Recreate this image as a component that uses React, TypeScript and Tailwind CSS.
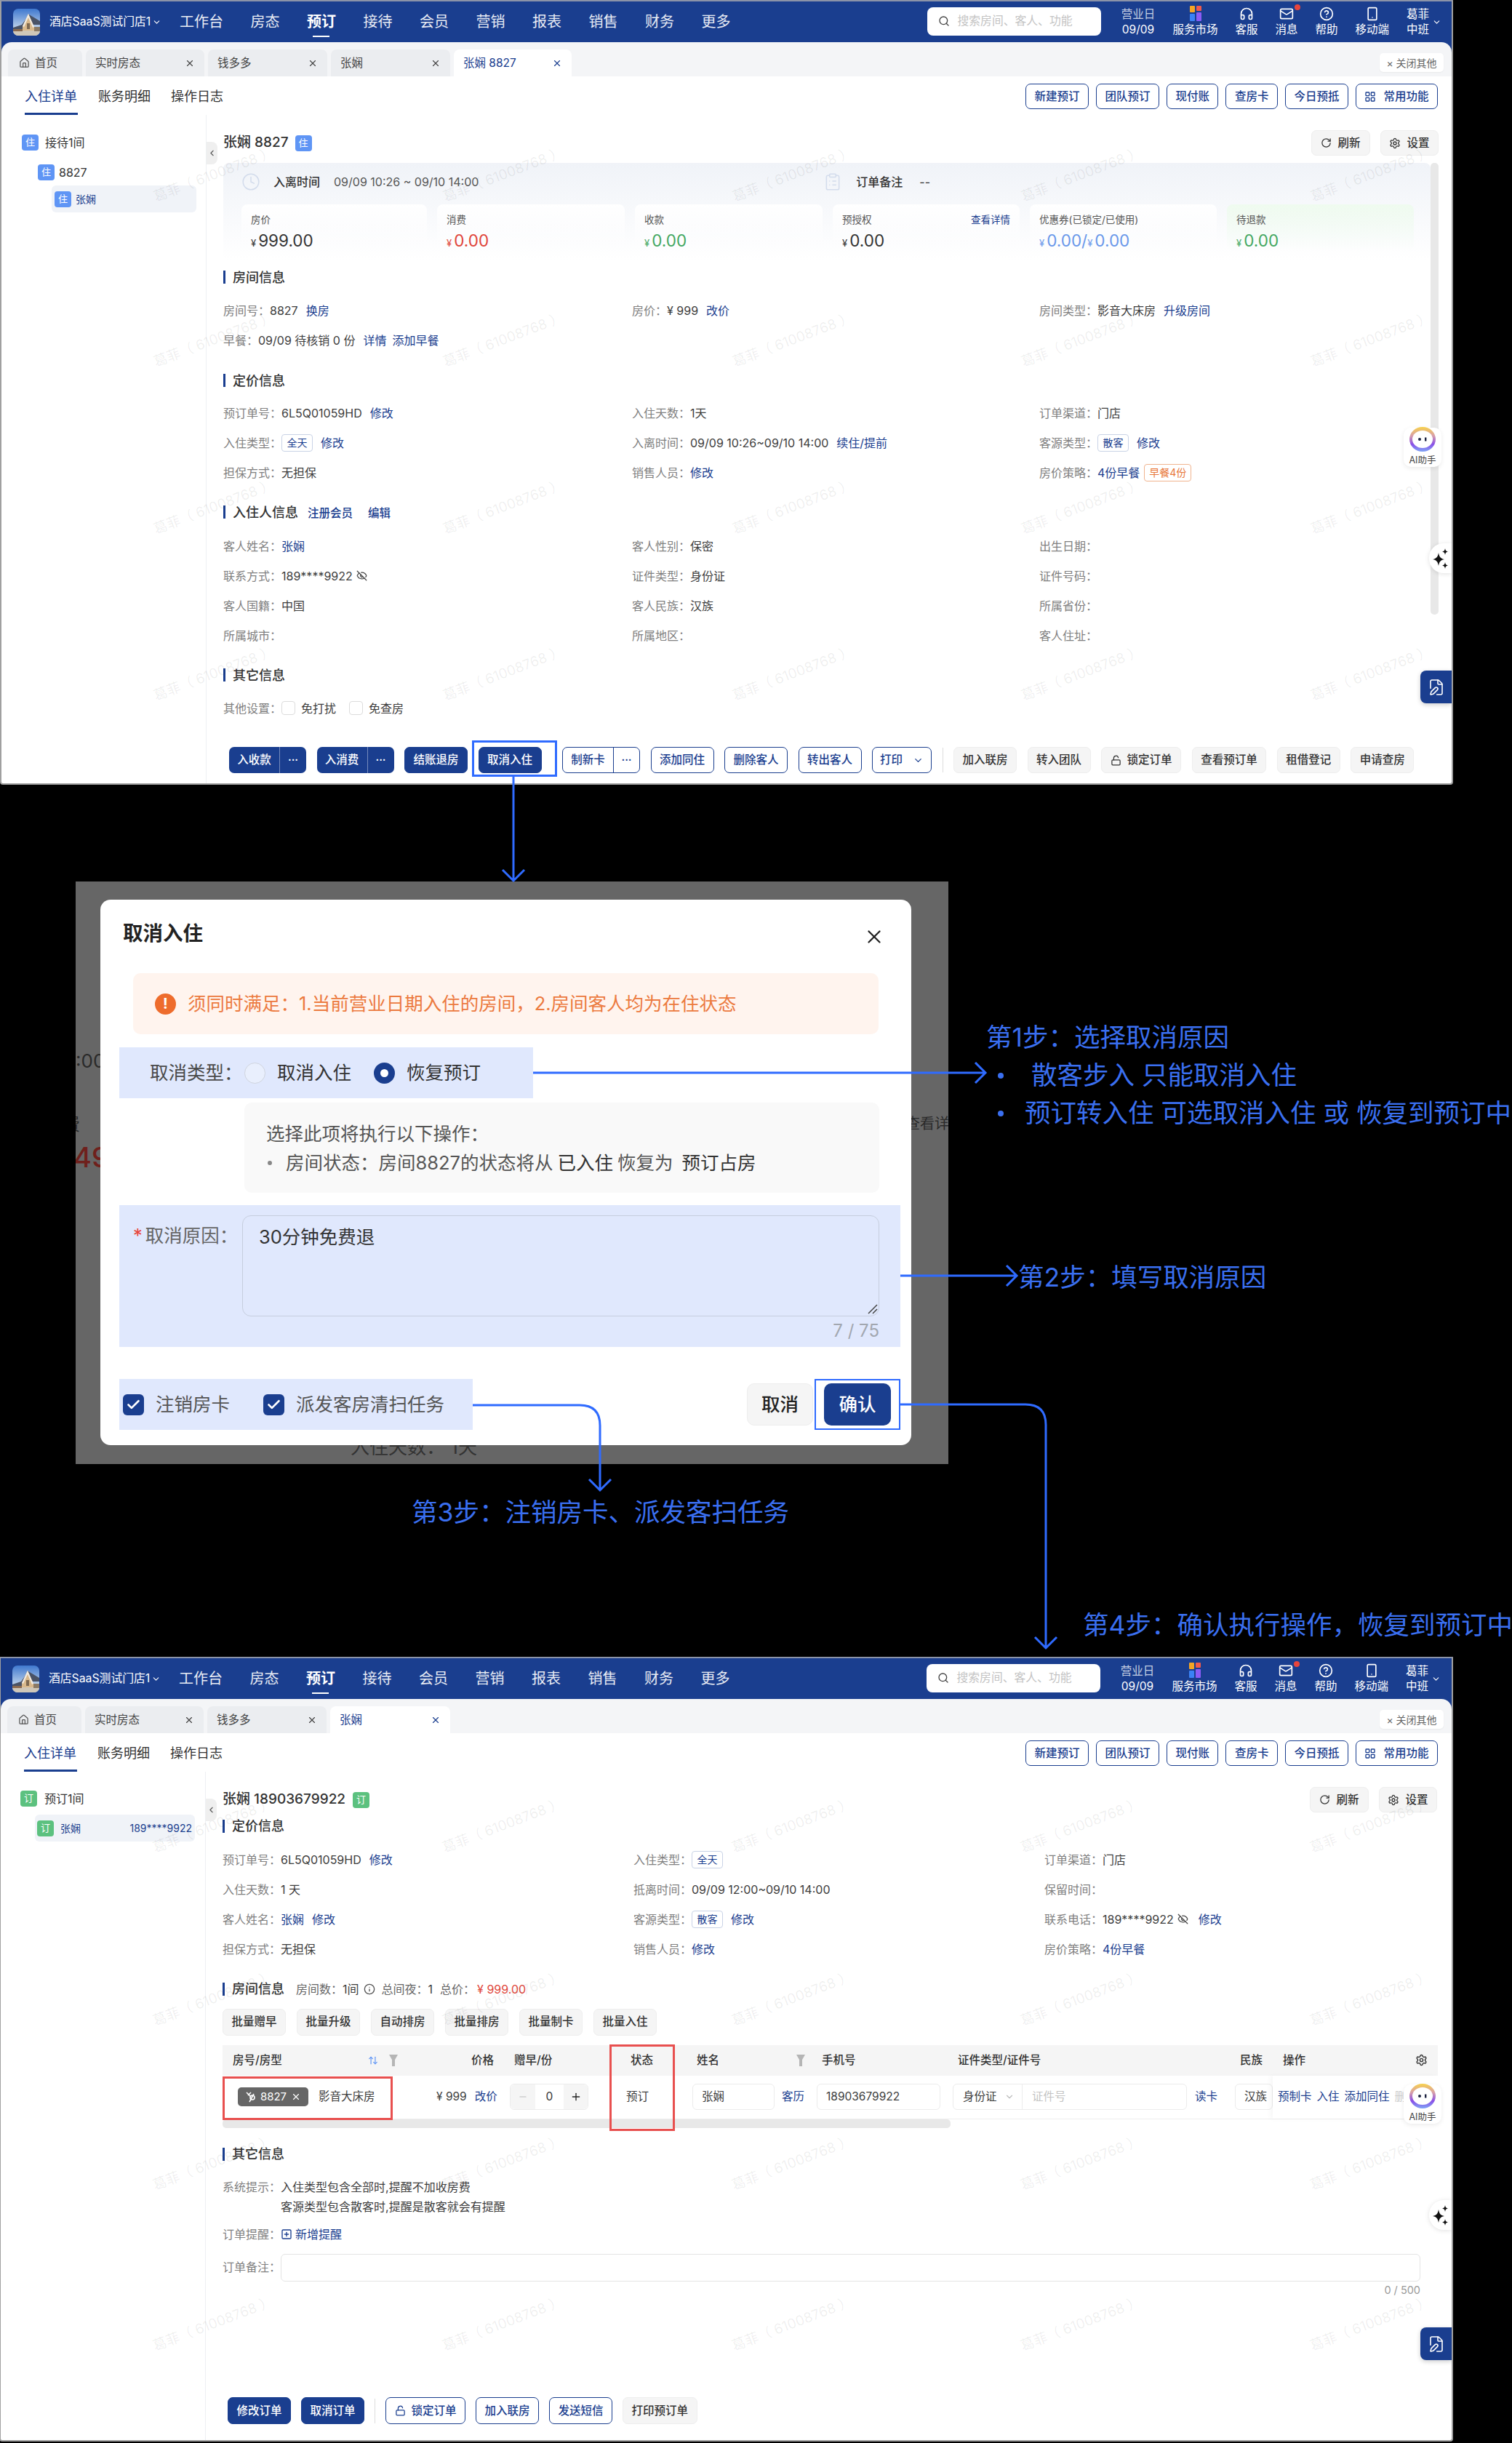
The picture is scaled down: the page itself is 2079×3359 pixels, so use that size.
import React from "react";
import { Search, Headphones, Mail, CircleHelp, Smartphone, ChevronDown, ChevronLeft, X, House, RotateCw, Settings, LayoutGrid, Clock, ClipboardList, EyeOff, LockOpen, FilePen, Plus, Minus, Info, SquarePlus, ArrowUpDown, Check } from "lucide-react";

const Logo = () => (
  <svg width="37" height="37" viewBox="0 0 37 37" className="rounded-[7px] shrink-0">
    <defs>
      <linearGradient id="sky" x1="0" y1="0" x2="0" y2="1">
        <stop offset="0" stopColor="#3f78cf" />
        <stop offset="0.7" stopColor="#b9cfe9" />
      </linearGradient>
    </defs>
    <rect width="37" height="37" fill="url(#sky)" />
    <polygon points="0,26 12,22 22,8 37,17 37,22 24,22 12,29 0,30" fill="#4a5366" />
    <polygon points="13,33 13,24 21,7 29,25 29,33" fill="#d9b98c" />
    <polygon points="21,7 29,25 27,26 21,12 15,25 13,24" fill="#f2ece2" />
    <rect x="19" y="20" width="4" height="8" fill="#7f6a52" />
    <rect x="0" y="30" width="37" height="7" fill="#cfc7b8" />
    <rect x="0" y="28" width="13" height="3" fill="#8a6a50" />
    <rect x="29" y="25" width="8" height="6" fill="#8a7a66" />
  </svg>
);

const Market = () => (
  <svg width="16" height="22" viewBox="0 0 16 22">
    <rect x="0" y="0" width="7" height="9" rx="1" fill="#f5a524" />
    <rect x="9" y="0" width="7" height="7" rx="1" fill="#ef5b4c" />
    <rect x="0" y="11" width="7" height="10" rx="1" fill="#3b82f6" />
    <rect x="9" y="9" width="7" height="12" rx="1" fill="#8b5cf6" />
  </svg>
);

const AiHelper = ({ top }: { top: number }) => (
  <div className="absolute right-[14px] w-[52px] h-[54px] bg-white rounded-[10px] shadow-[0_2px_6px_rgba(0,0,0,0.08)] flex flex-col items-center" style={{ top }}>
    <svg width="38" height="36" viewBox="0 0 38 36" className="-mt-[2px]">
      <defs>
        <linearGradient id="aig" x1="0" y1="0" x2="0" y2="1">
          <stop offset="0" stopColor="#f8d24a" />
          <stop offset="0.35" stopColor="#d9a0a8" />
          <stop offset="0.7" stopColor="#8a4fe8" />
          <stop offset="1" stopColor="#7fa6f5" />
        </linearGradient>
      </defs>
      <ellipse cx="19" cy="18" rx="18" ry="17" fill="url(#aig)" />
      <ellipse cx="19" cy="18" rx="14" ry="12" fill="#ffffff" />
      <circle cx="15" cy="18" r="2" fill="#1d2340" />
      <rect x="22" y="15.5" width="2.4" height="5" fill="#1d2340" />
    </svg>
    <span className="text-[12.5px] leading-[16px] text-[#444] mt-[3px] whitespace-nowrap">AI助手</span>
  </div>
);

const Stars = () => (
  <svg width="24" height="30" viewBox="0 0 24 30" fill="#111">
    <path d="M9 7 C10 13 12 15 17 16 C12 17 10 19 9 25 C8 19 6 17 1 16 C6 15 8 13 9 7 Z" />
    <path d="M18 1 C18.5 4 19.5 5 22 5.5 C19.5 6 18.500 7 18 10 C17.500 7 16.500 6 14 5.500 C16.500 5 17.500 4 18 1 Z" />
    <path d="M18 20 C18.5 23 19.5 24 22 24.5 C19.5 25 18.500 26 18 29 C17.500 26 16.500 25 14 24.500 C16.500 24 17.500 23 18 20 Z" />
  </svg>
);

const Floaters = ({ aiTop, sparkTop, noteTop }: { aiTop: number; sparkTop: number; noteTop: number }) => (
  <>
    <AiHelper top={aiTop} />
    <div className="absolute right-0 w-[31px] h-[41px] bg-white rounded-l-[20px] shadow-[0_1px_6px_rgba(0,0,0,0.12)] flex items-center justify-center" style={{ top: sparkTop }}>
      <Stars />
    </div>
    <div className="absolute right-0 w-[43px] h-[45px] bg-[#1a3e8f] rounded-l-[8px] shadow-[0_2px_6px_rgba(0,0,0,0.2)] flex items-center justify-center" style={{ top: noteTop }}>
      <FilePen size={24} strokeWidth={1.6} className="text-white" />
    </div>
  </>
);

const Watermarks = ({ ys }: { ys: number[] }) => (
  <div className="absolute inset-0 overflow-hidden pointer-events-none">
    {ys.flatMap((y) =>
      [210, 608, 1006, 1403, 1801].map((x) => (
        <span key={`${x}-${y}`} className="absolute whitespace-nowrap text-[19px] leading-[24px] text-black/[0.07] rotate-[-21deg] origin-left" style={{ left: x, top: y - 12 }}>
          葛菲（ 61008768 ）
        </span>
      ))
    )}
  </div>
);

const Header = () => (
  <div className="h-[56px] bg-[#1a3e8f] flex items-center pl-[16px] text-white shrink-0">
    <div className="w-[229px] flex items-center shrink-0">
      <Logo />
      <span className="ml-[13px] text-[15.8px] whitespace-nowrap">酒店SaaS测试门店1</span>
      <ChevronDown size={13} className="ml-[2px]" />
    </div>
    <div className="flex gap-[37.5px] text-[20px] shrink-0">
      {["工作台", "房态", "预订", "接待", "会员", "营销", "报表", "销售", "财务", "更多"].map((n) => (
        <span key={n} className={n === "预订" ? "relative font-bold" : "text-white/90"}>
          {n}
          {n === "预订" && <span className="absolute left-[8px] right-[9px] -bottom-[6px] h-[2px] bg-white" />}
        </span>
      ))}
    </div>
    <div className="ml-[270px] w-[239px] h-[39px] -mt-[2px] bg-white rounded-[8px] flex items-center pl-[15px] shrink-0">
      <Search size={16} className="text-[#444]" />
      <span className="ml-[11px] text-[15.8px] text-[#c4c4c4] whitespace-nowrap">搜索房间、客人、功能</span>
    </div>
    <div className="ml-[28px] flex gap-[24px] text-[15.5px] leading-[21px] -mt-[1px] shrink-0 whitespace-nowrap">
      <div className="flex flex-col items-center w-[47px]">
        <span className="text-white/75">营业日</span>
        <span>09/09</span>
      </div>
      <div className="flex flex-col items-center">
        <span className="h-[21px] flex items-center"><Market /></span>
        <span>服务市场</span>
      </div>
      <div className="flex flex-col items-center">
        <span className="h-[21px] flex items-center"><Headphones size={20} /></span>
        <span>客服</span>
      </div>
      <div className="flex flex-col items-center relative">
        <span className="h-[21px] flex items-center"><Mail size={20} /></span>
        <span>消息</span>
        <span className="absolute -right-[3px] -top-[3px] w-[8px] h-[8px] rounded-full bg-[#e8453c]" />
      </div>
      <div className="flex flex-col items-center">
        <span className="h-[21px] flex items-center"><CircleHelp size={20} /></span>
        <span>帮助</span>
      </div>
      <div className="flex flex-col items-center">
        <span className="h-[21px] flex items-center"><Smartphone size={20} /></span>
        <span>移动端</span>
      </div>
      <div className="flex flex-col items-center relative">
        <span>葛菲</span>
        <span>中班</span>
        <ChevronDown size={13} className="absolute -right-[17px] top-[15px]" />
      </div>
    </div>
  </div>
);

const Tab = ({ label, active, home, w }: { label: string; active?: boolean; home?: boolean; w: string }) => (
  <div className={`h-[37px] rounded-t-[8px] flex items-center text-[15.5px] ${w} ${active ? "bg-white text-[#1a3e8f]" : "bg-[#ebedf0] text-[#444]"} ${home ? "pl-[15px]" : "pl-[13px] pr-[13px] justify-between"}`}>
    {home && <House size={15} className="mr-[7px] text-[#555]" />}
    <span>{label}</span>
    {!home && <X size={14} />}
  </div>
);

const TabStrip = ({ tabs }: { tabs: { l: string; w: string; a?: boolean }[] }) => (
  <div className="bg-[#1a3e8f] shrink-0">
    <div className="h-[47px] bg-[#f4f5f7] rounded-t-[14px] flex items-end pl-[9px] pr-[11px]">
      <div className="flex gap-[5px]">
        <Tab label="首页" home w="w-[102px]" />
        {tabs.map((t) => (
          <Tab key={t.l} label={t.l} active={t.a} w={t.w} />
        ))}
      </div>
      <div className="ml-auto mb-[6px] h-[26px] w-[88px] bg-white rounded-[5px] flex items-center justify-center text-[14px] text-[#666] shadow-[0_1px_2px_rgba(0,0,0,0.05)]">
        × 关闭其他
      </div>
    </div>
  </div>
);

const Btn = ({ children, kind = "line", className = "", h = "h-[36px]" }: { children: React.ReactNode; kind?: "line" | "fill" | "gray"; className?: string; h?: string }) => {
  const k = kind === "fill" ? "bg-[#1a3e8f] text-white border border-[#1a3e8f]" : kind === "gray" ? "bg-[#f5f5f5] border border-[#eeeeee] text-[#333]" : "bg-white border border-[#1a3e8f] text-[#1a3e8f]";
  return <div className={`${h} px-[11.5px] rounded-[7px] flex items-center justify-center whitespace-nowrap text-[15.5px] font-medium shrink-0 ${k} ${className}`}>{children}</div>;
};

const SubRow = () => (
  <div className="h-[53px] flex shrink-0 pl-[32px] pr-[19px] bg-white">
    <div className="flex gap-[28px] text-[18px] text-[#333] pt-[13px]">
      <span className="h-[40px] w-[73px] text-[#1a3e8f] border-b-[3px] border-[#1a3e8f] leading-[30px]">入住详单</span>
      <span className="leading-[30px]">账务明细</span>
      <span className="leading-[30px]">操作日志</span>
    </div>
    <div className="ml-auto flex gap-[10px] pt-[10px] h-[45px]">
      <Btn h="h-[35px]">新建预订</Btn>
      <Btn h="h-[35px]">团队预订</Btn>
      <Btn h="h-[35px]">现付账</Btn>
      <Btn h="h-[35px]">查房卡</Btn>
      <Btn h="h-[35px]">今日预抵</Btn>
      <Btn h="h-[35px]"><LayoutGrid size={16} className="mr-[10px]" />常用功能</Btn>
    </div>
  </div>
);

const Badge = ({ c, green }: { c: string; green?: boolean }) => (
  <span className={`w-[23px] h-[22px] rounded-[4px] text-white text-[13px] flex items-center justify-center shrink-0 ${green ? "bg-[#5cc17f]" : "bg-[#5f95f5]"}`}>{c}</span>
);

const Sec = ({ children, className = "" }: { children: React.ReactNode; className?: string }) => (
  <div className={`h-[20px] flex items-center gap-[10px] ${className}`}>
    <span className="w-[3px] h-[18px] bg-[#1a3e8f]" />
    <span className="text-[18px] font-medium text-[#333] whitespace-nowrap">{children}</span>
  </div>
);

const L = ({ children }: { children: React.ReactNode }) => <span className="text-[#808080]">{children}</span>;
const V = ({ children }: { children?: React.ReactNode }) => <span className="text-[#3d3d3d]">{children}</span>;
const A = ({ children }: { children: React.ReactNode }) => <span className="text-[#1a3e8f]">{children}</span>;
const Chip = ({ children }: { children: React.ReactNode }) => (
  <span className="w-[43px] h-[24px] border border-[#c9d3e6] rounded-[4px] text-[14px] text-[#1a3e8f] flex items-center justify-center">{children}</span>
);
const F = ({ children }: { children?: React.ReactNode }) => <div className="h-[41px] flex items-center gap-[11px] text-[16px] whitespace-nowrap">{children}</div>;

const Refresh = () => (
  <div className="flex gap-[14px] ml-auto">
    <Btn kind="gray" h="h-[35px]" className="w-[81px] !px-0"><RotateCw size={15} className="mr-[8px]" />刷新</Btn>
    <Btn kind="gray" h="h-[35px]" className="w-[80px] !px-0"><Settings size={16} className="mr-[8px]" />设置</Btn>
  </div>
);

const Card = ({ label, children, color, w, link, bg }: { label: string; children: React.ReactNode; color: string; w: string; link?: string; bg?: string }) => (
  <div className={`${w} h-[64px] rounded-[8px] pl-[13px] pr-[13px] pt-[12px] ${bg ?? "bg-linear-to-b from-white to-white/0"}`}>
    <div className="flex justify-between text-[13.5px] leading-[18px] text-[#555] whitespace-nowrap">
      <span>{label}</span>
      {link && <span className="text-[#1a3e8f]">{link}</span>}
    </div>
    <div className={`mt-[6px] leading-[28px] text-[22.5px] whitespace-nowrap ${color}`}>{children}</div>
  </div>
);

const Money = ({ v }: { v: string }) => (
  <>
    <span className="text-[13px] mr-[3px]">¥</span>
    {v}
  </>
);

const Window1 = () => (
  <div className="relative w-[1998px] h-[1079px] shrink-0 box-border border-2 border-t-[#8b93a8] border-[#a0a0a0] rounded-b-[4px] bg-white overflow-hidden flex flex-col">
    <Header />
    <TabStrip tabs={[{ l: "实时房态", w: "w-[163px]" }, { l: "钱多多", w: "w-[164px]" }, { l: "张娴", w: "w-[164px]" }, { l: "张娴 8827", w: "w-[162px]", a: true }]} />
    <SubRow />
    <div className="flex-1 flex min-h-0">
      <aside className="w-[282px] shrink-0 border-r border-[#eef0f3] pt-[26px] relative">
        <div className="flex items-center pl-[28px] text-[16px] text-[#333] gap-[9px]"><Badge c="住" />接待1间</div>
        <div className="flex items-center pl-[50px] mt-[17px] text-[16px] text-[#333] gap-[6px]"><Badge c="住" />8827</div>
        <div className="ml-[69px] mt-[6px] w-[199px] h-[37px] bg-[#f0f3f8] rounded-[6px] flex items-center pl-[4px] gap-[6px] text-[14px] text-[#1a3e8f]"><Badge c="住" />张娴</div>
        <div className="absolute right-[-16px] top-[37px] w-[15px] h-[31px] bg-[#efefef] rounded-r-[8px] flex items-center justify-center z-10"><ChevronLeft size={13} className="text-[#555]" /></div>
      </aside>
      <main className="relative flex-1 min-w-0 pl-[23px] pr-[18px] pt-[21px] pb-[14px] flex flex-col">
        <div className="h-[35px] flex items-center">
          <span className="text-[19px] font-medium text-[#333]">张娴 8827</span>
          <span className="ml-[9px]"><Badge c="住" /></span>
          <Refresh />
        </div>
        <section className="mt-[10px] mr-[11px] h-[134px] rounded-[8px] bg-linear-to-b from-[#f0f3f8] to-white pt-[13px] pl-[25px] pr-[22px]">
          <div className="h-[26px] flex items-center text-[16px] text-[#333] whitespace-nowrap">
            <Clock size={26} strokeWidth={1.4} className="text-[#d3dcec]" />
            <span className="ml-[18px] font-medium">入离时间</span>
            <span className="ml-[19px] text-[#555]">09/09 10:26 ~ 09/10 14:00</span>
            <ClipboardList size={26} strokeWidth={1.4} className="ml-[474px] text-[#d3dcec]" />
            <span className="ml-[19px] font-medium">订单备注</span>
            <span className="ml-[23px]">--</span>
          </div>
          <div className="mt-[18px] flex gap-[14px]">
            <Card w="w-[255px]" label="房价" color="text-[#333]"><Money v="999.00" /></Card>
            <Card w="w-[258px]" label="消费" color="text-[#e0453a]"><Money v="0.00" /></Card>
            <Card w="w-[258px]" label="收款" color="text-[#45a862]"><Money v="0.00" /></Card>
            <Card w="w-[257px]" label="预授权" link="查看详情" color="text-[#333]"><Money v="0.00" /></Card>
            <Card w="w-[257px]" label="优惠券(已锁定/已使用)" color="text-[#6a98ea]"><Money v="0.00" />/<Money v="0.00" /></Card>
            <Card w="w-[257px]" label="待退款" color="text-[#45a862]" bg="bg-linear-to-b from-[#effbef] to-white/0"><Money v="0.00" /></Card>
          </div>
        </section>
        <div className="absolute right-[18px] top-[66px] w-[11px] h-[621px] rounded-[5px] bg-[#e8e8e8]" />

        <Sec className="mt-[13px]">房间信息</Sec>
        <div className="mt-[15px] grid grid-cols-[562px_560px_1fr]">
          <F><span><L>房间号：</L><V>8827</V></span><A>换房</A></F>
          <F><span><L>房价：</L><V>¥ 999</V></span><A>改价</A></F>
          <F><span><L>房间类型：</L><V>影音大床房</V></span><A>升级房间</A></F>
          <F><span><L>早餐：</L><V>09/09 待核销 0 份</V></span><A>详情</A><span className="-ml-[3px]"><A>添加早餐</A></span></F>
        </div>
        <Sec className="mt-[25px]">定价信息</Sec>
        <div className="mt-[14px] grid grid-cols-[562px_560px_1fr]">
          <F><span><L>预订单号：</L><V>6L5Q01059HD</V></span><A>修改</A></F>
          <F><span><L>入住天数：</L><V>1天</V></span></F>
          <F><span><L>订单渠道：</L><V>门店</V></span></F>
          <F><L>入住类型：</L><span className="-ml-[11px]"><Chip>全天</Chip></span><A>修改</A></F>
          <F><span><L>入离时间：</L><V>09/09 10:26~09/10 14:00</V></span><A>续住/提前</A></F>
          <F><L>客源类型：</L><span className="-ml-[11px]"><Chip>散客</Chip></span><A>修改</A></F>
          <F><span><L>担保方式：</L><V>无担保</V></span></F>
          <F><L>销售人员：</L><span className="-ml-[11px]"><A>修改</A></span></F>
          <F><L>房价策略：</L><span className="-ml-[11px]"><A>4份早餐</A></span>
            <span className="-ml-[5px] w-[65px] h-[24px] border border-[#f0b48f] rounded-[4px] text-[14px] text-[#e8773a] flex items-center justify-center">早餐4份</span></F>
        </div>
        <Sec className="mt-[24px]">入住人信息<span className="ml-[13px] text-[15.5px] text-[#1a3e8f]">注册会员</span><span className="ml-[21px] text-[15.5px] text-[#1a3e8f]">编辑</span></Sec>
        <div className="mt-[16px] grid grid-cols-[562px_560px_1fr]">
          <F><L>客人姓名：</L><span className="-ml-[11px]"><A>张娴</A></span></F>
          <F><span><L>客人性别：</L><V>保密</V></span></F>
          <F><L>出生日期：</L></F>
          <F><span><L>联系方式：</L><V>189****9922</V></span><EyeOff size={15} className="-ml-[6px] text-[#444]" /></F>
          <F><span><L>证件类型：</L><V>身份证</V></span></F>
          <F><L>证件号码：</L></F>
          <F><span><L>客人国籍：</L><V>中国</V></span></F>
          <F><span><L>客人民族：</L><V>汉族</V></span></F>
          <F><L>所属省份：</L></F>
          <F><L>所属城市：</L></F>
          <F><L>所属地区：</L></F>
          <F><L>客人住址：</L></F>
        </div>
        <Sec className="mt-[24px]">其它信息</Sec>
        <div className="mt-[15px]">
          <F>
            <L>其他设置：</L>
            <span className="-ml-[11px] w-[19px] h-[19px] border border-[#dcdcdc] rounded-[4px]" />
            <span className="-ml-[3px]"><V>免打扰</V></span>
            <span className="ml-[7px] w-[19px] h-[19px] border border-[#dcdcdc] rounded-[4px]" />
            <span className="-ml-[3px]"><V>免查房</V></span>
          </F>
        </div>
        <div className="mt-auto ml-[8px] flex gap-[14.5px] items-center">
          <div className="flex h-[36px] w-[106px] rounded-[7px] bg-[#1a3e8f] text-white text-[15.5px] font-medium items-center shrink-0"><span className="w-[70px] text-center border-r border-white/40 leading-[36px]">入收款</span><span className="flex-1 text-center">···</span></div>
          <div className="flex h-[36px] w-[106px] rounded-[7px] bg-[#1a3e8f] text-white text-[15.5px] font-medium items-center shrink-0"><span className="w-[70px] text-center border-r border-white/40 leading-[36px]">入消费</span><span className="flex-1 text-center">···</span></div>
          <Btn kind="fill">结账退房</Btn>
          <div className="relative">
            <Btn kind="fill">取消入住</Btn>
            <span className="absolute -left-[9px] -right-[21px] -top-[9px] -bottom-[5px] border-[3px] border-[#2f6bff]" />
          </div>
          <div className="ml-[14px] flex h-[36px] w-[107px] rounded-[7px] border border-[#1a3e8f] text-[#1a3e8f] text-[15.5px] font-medium items-center shrink-0"><span className="w-[70px] text-center border-r border-[#1a3e8f] leading-[34px]">制新卡</span><span className="flex-1 text-center">···</span></div>
          <Btn>添加同住</Btn>
          <Btn>删除客人</Btn>
          <Btn>转出客人</Btn>
          <Btn className="w-[82px] !px-0">打印<ChevronDown size={15} className="ml-[14px]" /></Btn>
          <span className="w-px h-[34px] bg-[#dddddd]" />
          <Btn kind="gray">加入联房</Btn>
          <Btn kind="gray">转入团队</Btn>
          <Btn kind="gray"><LockOpen size={15} className="mr-[8px]" />锁定订单</Btn>
          <Btn kind="gray">查看预订单</Btn>
          <Btn kind="gray">租借登记</Btn>
          <Btn kind="gray">申请查房</Btn>
        </div>
      </main>
    </div>
    <Floaters aiTop={586} sparkTop={745} noteTop={920} />
    <Watermarks ys={[270, 497, 727, 956]} />
  </div>
);

const Th = ({ children, cls = "" }: { children?: React.ReactNode; cls?: string }) => (
  <div className={`flex items-center text-[15.5px] font-medium text-[#333] whitespace-nowrap ${cls}`}>{children}</div>
);
const Funnel = () => (
  <svg width="12" height="16" viewBox="0 0 12 16"><polygon points="0,0 12,0 8,7 8,16 4,16 4,7" fill="#b5b5b5" /></svg>
);
const Box = ({ children, w }: { children?: React.ReactNode; w: string }) => (
  <div className={`h-[36px] border border-[#ececec] rounded-[6px] flex items-center pl-[12px] text-[15.5px] text-[#3d3d3d] whitespace-nowrap ${w}`}>{children}</div>
);
const Seat = () => (
  <svg width="15" height="16" viewBox="0 0 15 16" fill="none" stroke="#fff" strokeWidth="1.6"><path d="M2 2 L8 8 M8 2 L4 6 M12 4 L6 15" /><circle cx="10" cy="9" r="3" /></svg>
);

const Window2 = () => (
  <div className="relative -ml-px w-[1999px] h-[1079px] shrink-0 box-border border-2 border-t-[#8b93a8] border-[#a0a0a0] rounded-b-[4px] bg-white overflow-hidden flex flex-col">
    <Header />
    <TabStrip tabs={[{ l: "实时房态", w: "w-[163px]" }, { l: "钱多多", w: "w-[164px]" }, { l: "张娴", w: "w-[165px]", a: true }]} />
    <SubRow />
    <div className="flex-1 flex min-h-0">
      <aside className="w-[282px] shrink-0 border-r border-[#eef0f3] pt-[25px] relative">
        <div className="flex items-center pl-[27px] text-[16px] text-[#333] gap-[10px]"><Badge c="订" green />预订1间</div>
        <div className="ml-[47px] mt-[10px] w-[220px] h-[37px] bg-[#f0f3f8] rounded-[6px] flex items-center pl-[3px] pr-[4px] gap-[9px] text-[14px] text-[#1a3e8f]"><Badge c="订" green />张娴<span className="ml-auto">189****9922</span></div>
        <div className="absolute right-[-16px] top-[37px] w-[15px] h-[31px] bg-[#efefef] rounded-r-[8px] flex items-center justify-center z-10"><ChevronLeft size={13} className="text-[#555]" /></div>
      </aside>
      <main className="relative flex-1 min-w-0 pl-[23px] pr-[20px] pt-[21px] pb-[22px] flex flex-col">
        <div className="h-[35px] flex items-center">
          <span className="text-[19px] font-medium text-[#333]">张娴 18903679922</span>
          <span className="ml-[10px]"><Badge c="订" green /></span>
          <Refresh />
        </div>
        <Sec className="mt-[8.5px]">定价信息</Sec>
        <div className="mt-[15.5px] grid grid-cols-[565px_565px_1fr]">
          <F><span><L>预订单号：</L><V>6L5Q01059HD</V></span><A>修改</A></F>
          <F><L>入住类型：</L><span className="-ml-[11px]"><Chip>全天</Chip></span></F>
          <F><span><L>订单渠道：</L><V>门店</V></span></F>
          <F><span><L>入住天数：</L><V>1 天</V></span></F>
          <F><span><L>抵离时间：</L><V>09/09 12:00~09/10 14:00</V></span></F>
          <F><L>保留时间：</L></F>
          <F><L>客人姓名：</L><span className="-ml-[11px]"><A>张娴</A></span><A>修改</A></F>
          <F><L>客源类型：</L><span className="-ml-[11px]"><Chip>散客</Chip></span><A>修改</A></F>
          <F><span><L>联系电话：</L><V>189****9922</V></span><EyeOff size={15} className="-ml-[6px] text-[#444]" /><span className="ml-[3px]"><A>修改</A></span></F>
          <F><span><L>担保方式：</L><V>无担保</V></span></F>
          <F><L>销售人员：</L><span className="-ml-[11px]"><A>修改</A></span></F>
          <F><L>房价策略：</L><span className="-ml-[11px]"><A>4份早餐</A></span></F>
        </div>
        <div className="mt-[24.5px] h-[20px] flex items-center whitespace-nowrap">
          <Sec>房间信息</Sec>
          <span className="ml-[16px] text-[16px] text-[#666]">房间数：<span className="text-[#3d3d3d]">1间</span></span>
          <Info size={16} className="ml-[6px] text-[#555]" />
          <span className="ml-[9px] text-[16px] text-[#666]">总间夜：<span className="text-[#3d3d3d]">1</span></span>
          <span className="ml-[10px] text-[16px] text-[#666]">总价：</span>
          <span className="ml-[3px] text-[16px] text-[#e0453a]">¥ 999.00</span>
        </div>
        <div className="mt-[17px] flex gap-[15px]">
          {["批量赠早", "批量升级", "自动排房", "批量排房", "批量制卡", "批量入住"].map((b) => (
            <Btn key={b} kind="gray" h="h-[37px]">{b}</Btn>
          ))}
        </div>
        <div className="relative mt-[13px] w-[1671px]">
          <div className="grid grid-cols-[284px_103px_145px_107px_173px_187px_385px_60px_227px] h-[42px] bg-[#f5f5f5]">
            <Th cls="pl-[14px]">房号/房型<ArrowUpDown size={14} className="ml-[118px] text-[#5f95f5]" /><span className="ml-[15px]"><Funnel /></span></Th>
            <Th cls="pl-[58px]">价格</Th>
            <Th cls="pl-[14px]">赠早/份</Th>
            <Th cls="pl-[29px]">状态</Th>
            <Th cls="pl-[13px]">姓名<span className="ml-[106px]"><Funnel /></span></Th>
            <Th cls="pl-[12px]">手机号</Th>
            <Th cls="pl-[12px]">证件类型/证件号</Th>
            <Th cls="pl-[15px]">民族</Th>
            <Th cls="pl-[14px] justify-between pr-[14px]">操作<Settings size={17} /></Th>
          </div>
          <div className="grid grid-cols-[284px_103px_145px_107px_173px_187px_385px_60px_227px] h-[60px] border-b border-[#eeeeee] items-center">
            <div className="pl-[21px] flex items-center">
              <span className="w-[97px] h-[26px] bg-[#666666] rounded-[5px] text-white text-[15px] flex items-center justify-center gap-[6px]">
                <Seat />8827<X size={14} />
              </span>
              <span className="ml-[14px] text-[15.5px] text-[#3d3d3d]">影音大床房</span>
            </div>
            <div className="pl-[10px] text-[15.5px] whitespace-nowrap"><V>¥ 999</V><span className="ml-[11px] text-[#1a3e8f]">改价</span></div>
            <div className="pl-[8px]">
              <div className="w-[108px] h-[36px] border border-[#ececec] rounded-[6px] flex items-center">
                <span className="w-[34px] h-full bg-[#f5f5f5] flex items-center justify-center rounded-l-[6px]"><Minus size={14} className="text-[#bbb]" /></span>
                <span className="flex-1 text-center text-[15.5px] text-[#333]">0</span>
                <span className="w-[33px] h-full bg-[#f5f5f5] flex items-center justify-center rounded-r-[6px]"><Plus size={16} className="text-[#222]" /></span>
              </div>
            </div>
            <div className="pl-[23px] text-[15.5px] text-[#3d3d3d]">预订</div>
            <div className="pl-[7px] flex items-center gap-[10px] whitespace-nowrap"><Box w="w-[113px]">张娴</Box><span className="text-[15.5px] text-[#1a3e8f]">客历</span></div>
            <div className="pl-[5px]"><Box w="w-[170px]">18903679922</Box></div>
            <div className="pl-[5px] flex items-center gap-[11px] whitespace-nowrap">
              <div className="w-[322px] h-[36px] border border-[#ececec] rounded-[6px] flex items-center text-[15.5px]">
                <span className="w-[95px] h-full pl-[13px] border-r border-[#ececec] flex items-center text-[#3d3d3d]">身份证<ChevronDown size={14} className="ml-[10px] text-[#bbb]" /></span>
                <span className="pl-[13px] text-[#c4c4c4]">证件号</span>
              </div>
              <span className="text-[15.5px] text-[#1a3e8f]">读卡</span>
            </div>
            <div className="pl-[8px]"><Box w="w-[52px]">汉族</Box></div>
            <div className="pl-[7px] h-full bg-white flex items-center gap-[7px] text-[15.5px] text-[#1a3e8f] whitespace-nowrap overflow-hidden shadow-[-4px_0_6px_rgba(0,0,0,0.03)]">
              <span>预制卡</span><span>入住</span><span>添加同住</span><span className="text-[#ccc]">删除</span>
            </div>
          </div>
          <div className="h-[12px] w-[1001px] bg-[#e8e8e8] rounded-[5px]" />
          <span className="absolute left-0 top-[43px] w-[234px] h-[60px] border-[3px] border-[#e8504f]" />
          <span className="absolute left-[532px] -top-[1px] w-[90px] h-[119px] border-[3px] border-[#e8504f]" />
        </div>
        <Sec className="mt-[26px]">其它信息</Sec>
        <div className="mt-[22.5px] flex text-[16px] leading-[27px]">
          <L>系统提示：</L>
          <div className="text-[#3d3d3d]">入住类型包含全部时,提醒不加收房费<br />客源类型包含散客时,提醒是散客就会有提醒</div>
        </div>
        <div className="mt-[10px] h-[27px] flex items-center text-[16px]">
          <L>订单提醒：</L>
          <SquarePlus size={16} className="text-[#1a3e8f] mr-[4px]" />
          <A>新增提醒</A>
        </div>
        <div className="mt-[13.5px] flex text-[16px]">
          <span className="pt-[6px]"><L>订单备注：</L></span>
          <div className="w-[1567px]">
            <div className="h-[38px] border border-[#e4e4e4] rounded-[6px]" />
            <div className="mt-[1px] text-right text-[14.5px] leading-[22px] text-[#999]">0 / 500</div>
          </div>
        </div>
        <div className="mt-auto ml-[7px] flex items-center gap-[14px]">
          <Btn kind="fill" h="h-[37px]">修改订单</Btn>
          <Btn kind="fill" h="h-[37px]">取消订单</Btn>
          <span className="w-px h-[34px] bg-[#dddddd]" />
          <Btn h="h-[37px]"><LockOpen size={15} className="mr-[8px]" />锁定订单</Btn>
          <Btn h="h-[37px]">加入联房</Btn>
          <Btn h="h-[37px]">发送短信</Btn>
          <Btn kind="gray" h="h-[37px]">打印预订单</Btn>
        </div>
      </main>
    </div>
    <Floaters aiTop={586} sparkTop={745} noteTop={920} />
    <Watermarks ys={[262, 500, 726, 947]} />
  </div>
);

const Modal = () => (
  <div className="relative ml-[104px] mt-[133px] w-[1200px] h-[801px] bg-[#666666] overflow-hidden pt-[25px] pl-[34px]">
    <span className="absolute left-0 top-[228px] text-[26px] leading-[38px] text-[#2a2a2a]">:00</span>
    <span className="absolute -left-[18px] top-[318px] text-[24px] leading-[32px] text-[#2a2a2a]">费</span>
    <span className="absolute left-[-3px] top-[351px] text-[38px] leading-[56px] font-medium text-[#6f201c]">49</span>
    <span className="absolute left-[1141px] top-[318px] whitespace-nowrap text-[20px] leading-[30px] text-[#2a2a2a]">查看详情</span>
    <span className="absolute left-[378px] top-[760px] whitespace-nowrap text-[26px] leading-[36px] text-[#333]">入住天数： 1天</span>
    <div className="relative w-[1115px] h-[750px] bg-white rounded-[14px] flex flex-col text-[25.5px] text-[#444]">
      <div className="h-[40px] mt-[27px] pl-[31px] pr-[36px] flex items-center justify-between">
        <span className="text-[27.5px] font-bold text-[#222]">取消入住</span>
        <X size={30} strokeWidth={1.8} className="text-[#222] mt-[8px]" />
      </div>
      <div className="mt-[34px] mx-[45px] h-[84px] rounded-[10px] bg-[#fff4ee] flex items-center pl-[30px] text-[#ec7a3f]">
        <span className="w-[29px] h-[29px] rounded-full bg-[#ee6c2c] text-white text-[20px] font-bold flex items-center justify-center">!</span>
        <span className="ml-[16px] whitespace-nowrap">须同时满足：1.当前营业日期入住的房间，2.房间客人均为在住状态</span>
      </div>
      <div className="mt-[18px] ml-[26px] w-[569px] h-[70px] bg-[#e0e8fd] flex items-center pl-[42px] whitespace-nowrap">
        <span className="w-[130px] text-[#4a4a4a]">取消类型：</span>
        <span className="w-[29px] h-[29px] rounded-full border border-[#cfd4de] bg-white/30" />
        <span className="ml-[16px] text-[#333]">取消入住</span>
        <span className="ml-[31px] w-[29px] h-[29px] rounded-full bg-[#1a3e8f] flex items-center justify-center"><span className="w-[11px] h-[11px] rounded-full bg-white" /></span>
        <span className="ml-[16px] text-[#333]">恢复预订</span>
      </div>
      <div className="mt-[6px] ml-[198px] mr-[44px] h-[124px] rounded-[10px] bg-[#f9f9f9] pl-[30px] pt-[23px] text-[25.5px] leading-[40px] text-[#555] whitespace-nowrap">
        <div>选择此项将执行以下操作：</div>
        <div className="flex items-center">
          <span className="w-[6px] h-[6px] rounded-full bg-[#888] ml-[2px] mr-[19px]" />
          房间状态：房间8827的状态将从<span className="text-[#333] ml-[6px]">已入住</span><span className="text-[#555] ml-[6px]">恢复为</span><span className="text-[#333] ml-[12px]">预订占房</span>
        </div>
      </div>
      <div className="mt-[17px] ml-[26px] mr-[15px] h-[195px] bg-[#e0e8fd] pt-[14px] flex">
        <div className="w-[169px] pl-[19px] pt-[10px] leading-[36px] whitespace-nowrap">
          <span className="text-[#e8453c] mr-[4px]">*</span><span className="text-[#666]">取消原因：</span>
        </div>
        <div className="w-[876px]">
          <div className="relative h-[139px] border border-[#c6cede] rounded-[12px] pl-[22px] pt-[11px] leading-[36px] text-[#333]">
            30分钟免费退
            <svg width="14" height="14" viewBox="0 0 14 14" className="absolute right-[1px] bottom-[2px]"><path d="M1 13 L13 1 M7 13 L13 7" stroke="#444" strokeWidth="1.5" /></svg>
          </div>
          <div className="text-right text-[24px] leading-[40px] text-[#a2a7b0]">7 / 75</div>
        </div>
      </div>
      <div className="mt-[44px] flex h-[70px]">
        <div className="ml-[26px] w-[486px] h-full bg-[#e0e8fd] flex items-center pl-[5px] text-[#555] whitespace-nowrap">
          <span className="w-[29px] h-[29px] rounded-[6px] bg-[#1a3e8f] flex items-center justify-center"><Check size={21} strokeWidth={3} className="text-white" /></span>
          <span className="ml-[16px]">注销房卡</span>
          <span className="ml-[46px] w-[29px] h-[29px] rounded-[6px] bg-[#1a3e8f] flex items-center justify-center"><Check size={21} strokeWidth={3} className="text-white" /></span>
          <span className="ml-[16px]">派发客房清扫任务</span>
        </div>
        <div className="ml-auto mr-[28px] pt-[6px] flex gap-[15px]">
          <div className="w-[91px] h-[58px] rounded-[10px] bg-[#f5f5f5] border border-[#eeeeee] text-[#222] font-medium flex items-center justify-center">取消</div>
          <div className="relative w-[92px] h-[58px] rounded-[10px] bg-[#1a3e8f] text-white font-medium flex items-center justify-center">
            确认
            <span className="absolute -left-[13px] -right-[13px] -top-[6px] -bottom-[6px] border-[2px] border-[#2f6bff]" />
          </div>
        </div>
      </div>
    </div>
  </div>
);

const Note = ({ top, left, children }: { top: number; left: number; children: React.ReactNode }) => (
  <div className="absolute h-[52px] leading-[52px] text-[35.5px] text-[#3a6ff0] whitespace-nowrap flex items-center" style={{ top: top - 26, left }}>{children}</div>
);
const Dot = () => <span className="w-[8px] h-[8px] rounded-full bg-[#3a6ff0] shrink-0" />;

const Connectors = () => (
  <svg width="2079" height="3359" className="absolute inset-0 pointer-events-none" fill="none" stroke="#2f6bff" strokeWidth="3">
    <path d="M706 1068 V1211 M691 1196 L706 1211 L721 1196" />
    <path d="M733 1475 H1355 M1341 1461 L1355 1475 L1341 1489" />
    <path d="M1238 1754 H1398 M1384 1740 L1398 1754 L1384 1768" />
    <path d="M650 1932 H797 Q825 1932 825 1960 V2049 M810 2034 L825 2049 L840 2034" />
    <path d="M1238 1931 H1410 Q1438 1931 1438 1959 V2266 M1423 2251 L1438 2266 L1453 2251" />
  </svg>
);

export default function App() {
  return (
    <div className="relative w-[2079px] h-[3359px] bg-black overflow-hidden font-['Inter','Noto_Sans_CJK_SC',sans-serif]">
      <Window1 />
      <div className="h-[1199px] overflow-hidden">
        <Modal />
      </div>
      <Window2 />
      <Connectors />
      <Note top={1427} left={1356}>第1步：选择取消原因</Note>
      <Note top={1479} left={1372}><Dot /><span className="ml-[38px]">散客步入 只能取消入住</span></Note>
      <Note top={1531} left={1372}><Dot /><span className="ml-[29px]">预订转入住 可选取消入住 或 恢复到预订中</span></Note>
      <Note top={1757} left={1400}>第2步：填写取消原因</Note>
      <Note top={2080} left={566}>第3步：注销房卡、派发客扫任务</Note>
      <Note top={2235} left={1489}>第4步：确认执行操作，恢复到预订中</Note>
    </div>
  );
}
